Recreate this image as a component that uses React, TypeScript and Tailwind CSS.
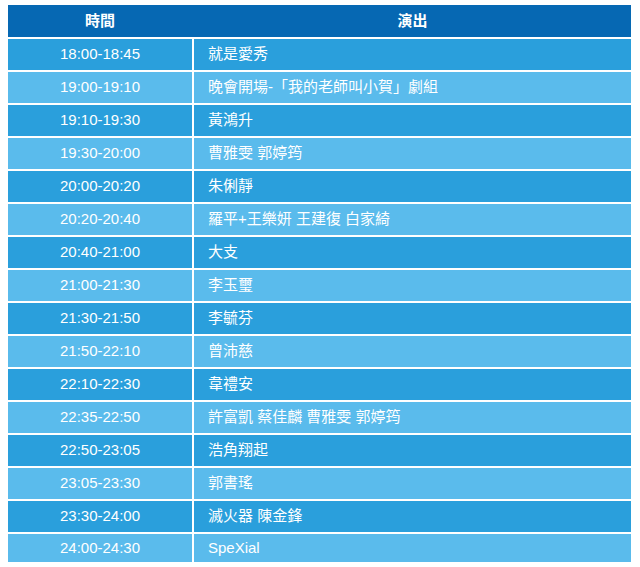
import React from "react";

const rows = [
  ["18:00-18:45", "就是愛秀"],
  ["19:00-19:10", "晚會開場-「我的老師叫小賀」劇組"],
  ["19:10-19:30", "黃鴻升"],
  ["19:30-20:00", "曹雅雯 郭婷筠"],
  ["20:00-20:20", "朱俐靜"],
  ["20:20-20:40", "羅平+王樂妍 王建復 白家綺"],
  ["20:40-21:00", "大支"],
  ["21:00-21:30", "李玉璽"],
  ["21:30-21:50", "李毓芬"],
  ["21:50-22:10", "曾沛慈"],
  ["22:10-22:30", "韋禮安"],
  ["22:35-22:50", "許富凱 蔡佳麟 曹雅雯 郭婷筠"],
  ["22:50-23:05", "浩角翔起"],
  ["23:05-23:30", "郭書瑤"],
  ["23:30-24:00", "滅火器 陳金鋒"],
  ["24:00-24:30", "SpeXial"],
];

export default function App() {
  return (
    <main
      className="w-[640px] h-[567px] bg-white pl-[8px] pt-[5px] text-white text-[15px] overflow-hidden"
      style={{ fontFamily: '"Liberation Sans", "Noto Sans CJK TC", sans-serif' }}
    >
      <div className="w-[623px] flex flex-col gap-[2px]">
        <div className="grid grid-cols-[184px_1fr] gap-[2px] h-[32px] bg-[#0668b3] font-bold">
          <div className="flex items-center justify-center">時間</div>
          <div className="flex items-center justify-center">演出</div>
        </div>
        {rows.map(([time, act], i) => (
          <div
            key={time}
            className={
              "grid grid-cols-[184px_1fr] gap-[2px] " +
              (i === rows.length - 1 ? "h-[28px]" : "h-[31px]")
            }
          >
            <div
              className={
                "flex items-center justify-center " +
                (i % 2 === 0 ? "bg-[#2a9fdc]" : "bg-[#5abbec]")
              }
            >
              {time}
            </div>
            <div
              className={
                "flex items-center pl-[14px] " +
                (i % 2 === 0 ? "bg-[#2a9fdc]" : "bg-[#5abbec]")
              }
            >
              {act}
            </div>
          </div>
        ))}
      </div>
    </main>
  );
}
